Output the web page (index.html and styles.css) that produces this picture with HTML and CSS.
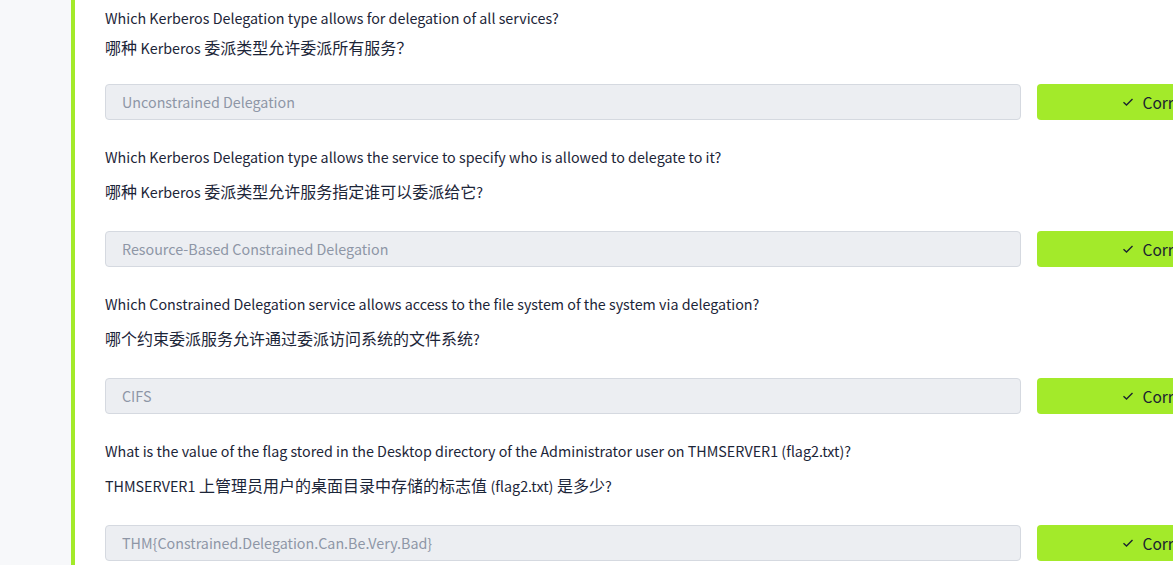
FILE: index.html
```html
<!DOCTYPE html>
<html lang="zh">
<head>
<meta charset="utf-8">
<link rel="stylesheet" href="styles.css">
</head>
<body>
<div class="page">
  <aside class="sidebar"></aside>
  <main class="task">
    <section class="question first">
      <p class="q-en">Which Kerberos Delegation type allows for delegation of all services?</p>
      <p class="q-zh">哪种 <span class="lat">Kerberos</span> 委派类型允许委派所有服务？</p>
      <div class="answer">
        <div class="field">Unconstrained Delegation</div>
        <button class="btn"><svg class="check" viewBox="0 0 12 10" width="12" height="10"><path d="M1.5 5.2 L4.5 8 L10.5 2" fill="none" stroke="#1b2330" stroke-width="1.4"/></svg>Correct Answer</button>
      </div>
    </section>
    <section class="question">
      <p class="q-en">Which Kerberos Delegation type allows the service to specify who is allowed to delegate to it?</p>
      <p class="q-zh">哪种 <span class="lat">Kerberos</span> 委派类型允许服务指定谁可以委派给它<span class="lat">?</span></p>
      <div class="answer">
        <div class="field">Resource-Based Constrained Delegation</div>
        <button class="btn"><svg class="check" viewBox="0 0 12 10" width="12" height="10"><path d="M1.5 5.2 L4.5 8 L10.5 2" fill="none" stroke="#1b2330" stroke-width="1.4"/></svg>Correct Answer</button>
      </div>
    </section>
    <section class="question">
      <p class="q-en">Which Constrained Delegation service allows access to the file system of the system via delegation?</p>
      <p class="q-zh">哪个约束委派服务允许通过委派访问系统的文件系统<span class="lat">?</span></p>
      <div class="answer">
        <div class="field">CIFS</div>
        <button class="btn"><svg class="check" viewBox="0 0 12 10" width="12" height="10"><path d="M1.5 5.2 L4.5 8 L10.5 2" fill="none" stroke="#1b2330" stroke-width="1.4"/></svg>Correct Answer</button>
      </div>
    </section>
    <section class="question">
      <p class="q-en">What is the value of the flag stored in the Desktop directory of the Administrator user on THMSERVER1 (flag2.txt)?</p>
      <p class="q-zh"><span class="lat">THMSERVER1</span> 上管理员用户的桌面目录中存储的标志值 <span class="lat">(flag2.txt)</span> 是多少<span class="lat">?</span></p>
      <div class="answer">
        <div class="field">THM{Constrained.Delegation.Can.Be.Very.Bad}</div>
        <button class="btn"><svg class="check" viewBox="0 0 12 10" width="12" height="10"><path d="M1.5 5.2 L4.5 8 L10.5 2" fill="none" stroke="#1b2330" stroke-width="1.4"/></svg>Correct Answer</button>
      </div>
    </section>
  </main>
</div>
</body>
</html>
```
FILE: styles.css
```css
html, body {
  margin: 0;
  padding: 0;
  background: #ffffff;
  overflow: hidden;
}
body {
  font-family: "Noto Sans CJK SC", "Noto Sans", sans-serif;
  color: #1c2538;
  font-size: 14.3px;
}
.page {
  display: flex;
  height: 565px;
  overflow: hidden;
}
.sidebar {
  flex: 0 0 71px;
  background: #f7f8fa;
}
.task {
  flex: 1 1 auto;
  border-left: 4px solid #a3ea2a;
  padding-left: 30px;
  overflow: hidden;
  min-width: 0;
}
.question {
  padding-top: 25px;
}
.question.first {
  padding-top: 6px;
}
.q-en, .q-zh {
  margin: 0;
  height: 24px;
  line-height: 24px;
  white-space: nowrap;
}
.q-zh {
  margin-top: 10px;
  font-size: 16px;
}
.q-zh .lat {
  font-size: 14.3px;
  line-height: 1;
}
.first .q-zh {
  margin-top: 5px;
}
.answer {
  display: flex;
  gap: 16px;
  margin-top: 28px;
}
.first .answer {
  margin-top: 25px;
}
.field {
  flex: 0 0 916px;
  box-sizing: border-box;
  height: 36px;
  border: 1px solid #d5d9e0;
  border-radius: 4px;
  background: #eceef2;
  color: #8e96a6;
  padding: 0 16px;
  line-height: 34px;
  white-space: nowrap;
}
.btn {
  flex: 0 0 300px;
  height: 36px;
  border: none;
  border-radius: 4px;
  background: #a3ea2a;
  color: #1b2330;
  font: inherit;
  font-size: 15.5px;
  display: flex;
  align-items: center;
  justify-content: center;
  gap: 9px;
  padding: 0;
  white-space: nowrap;
}
.check {
  display: block;
}
```
